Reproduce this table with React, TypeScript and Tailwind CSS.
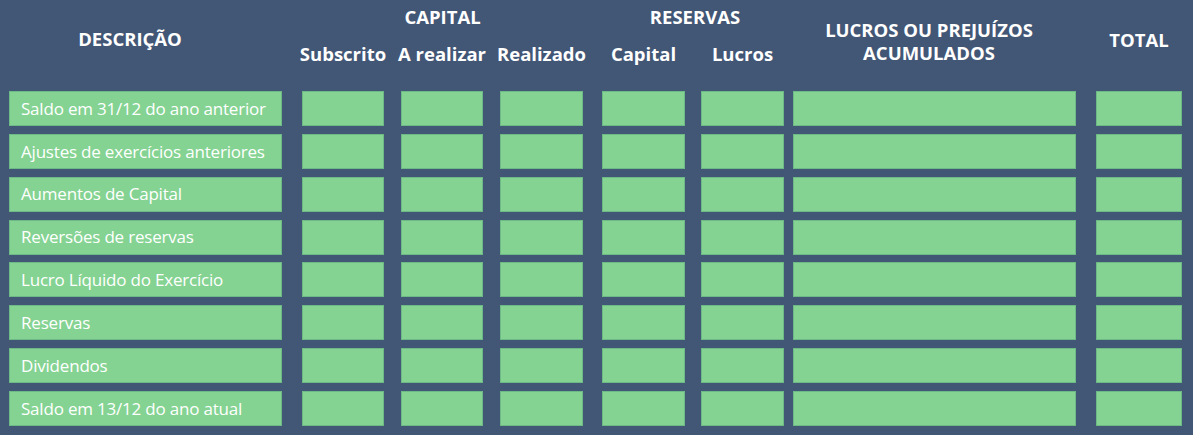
const rows = [
  "Saldo em 31/12 do ano anterior",
  "Ajustes de exercícios anteriores",
  "Aumentos de Capital",
  "Reversões de reservas",
  "Lucro Líquido do Exercício",
  "Reservas",
  "Dividendos",
  "Saldo em 13/12 do ano atual",
];

// widths and left margins of the eight columns, written out in full
const cols = [
  "w-[273px] ml-[9px]",
  "w-[82px] ml-[20px]",
  "w-[82px] ml-[17px]",
  "w-[83px] ml-[17px]",
  "w-[83px] ml-[19px]",
  "w-[83px] ml-[16px]",
  "w-[283px] ml-[9px]",
  "w-[86px] ml-[20px]",
];

const cell =
  "h-[35px] shrink-0 bg-[#84d392] border border-[#6dba87] flex items-center";

function App() {
  return (
    <div
      className="w-[1193px] h-[435px] bg-[#425675] text-white overflow-hidden"
      style={{ fontFamily: '"Open Sans", "Noto Sans", sans-serif' }}
    >
      {/* header */}
      <div className="flex h-[91px] font-bold text-[18.5px] leading-none">
        <div className={`${cols[0]} shrink-0 flex items-center justify-center pr-[31px] pb-[12px]`}>
          DESCRIÇÃO
        </div>
        <div className="flex flex-col ml-[20px] shrink-0">
          <div className="h-[34px] flex items-center justify-center">CAPITAL</div>
          <div className="flex">
            <div className="w-[82px] h-[40px] flex items-center justify-center whitespace-nowrap">Subscrito</div>
            <div className="w-[82px] ml-[17px] h-[40px] flex items-center justify-center whitespace-nowrap">A realizar</div>
            <div className="w-[83px] ml-[17px] h-[40px] flex items-center justify-center whitespace-nowrap">Realizado</div>
          </div>
        </div>
        <div className="flex flex-col ml-[19px] shrink-0">
          <div className="h-[34px] flex items-center justify-center pl-[4px]">RESERVAS</div>
          <div className="flex">
            <div className="w-[83px] h-[40px] flex items-center justify-center">Capital</div>
            <div className="w-[83px] ml-[16px] h-[40px] flex items-center justify-center">Lucros</div>
          </div>
        </div>
        <div className={`${cols[6]} shrink-0 flex flex-col items-center justify-center pr-[11px] pb-[10px] leading-[23px] text-center whitespace-nowrap`}>
          <span>LUCROS OU PREJUÍZOS</span>
          <span>ACUMULADOS</span>
        </div>
        <div className={`${cols[7]} shrink-0 flex items-center justify-center pb-[10px]`}>
          TOTAL
        </div>
      </div>

      {/* body */}
      <div className="flex flex-col gap-y-[7.86px]">
        {rows.map((label) => (
          <div key={label} className="flex">
            <div className={`${cell} ${cols[0]} pl-[11px] text-[17px] tracking-[-0.2px] whitespace-nowrap`}>
              {label}
            </div>
            {cols.slice(1).map((c, i) => (
              <div key={i} className={`${cell} ${c}`} />
            ))}
          </div>
        ))}
      </div>
    </div>
  );
}

export default App;
